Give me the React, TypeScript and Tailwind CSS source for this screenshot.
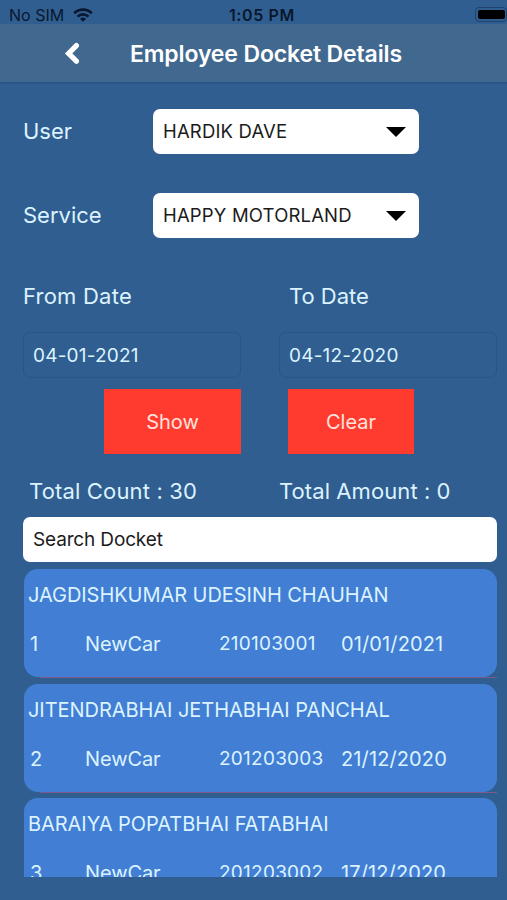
const dockets = [
  { id: 1, name: 'JAGDISHKUMAR UDESINH CHAUHAN', type: 'NewCar', number: '210103001', date: '01/01/2021' },
  { id: 2, name: 'JITENDRABHAI JETHABHAI PANCHAL', type: 'NewCar', number: '201203003', date: '21/12/2020' },
  { id: 3, name: 'BARAIYA POPATBHAI FATABHAI', type: 'NewCar', number: '201203002', date: '17/12/2020' },
]

function StatusBar() {
  return (
    <div className="flex h-6 items-center bg-[#305e90] pl-[9px] pt-[5px] text-[#08182e]">
      <div className="flex w-[220px] items-center gap-[9px]">
        <span className="text-[16px] leading-none">No SIM</span>
        <svg width="20" height="14" viewBox="0 0 20 14" fill="none" stroke="currentColor" strokeWidth="2.6">
          <path d="M1.2 5.2a12.6 12.6 0 0 1 17.6 0" />
          <path d="M4.5 8.6a7.8 7.8 0 0 1 11 0" />
          <path d="M7 11a4.3 4.3 0 0 1 6 0L10 13.8z" fill="currentColor" stroke="none" />
        </svg>
      </div>
      <span className="whitespace-nowrap text-[16px] font-semibold leading-none tracking-[0.6px]">1:05 PM</span>
      <div className="flex flex-1 justify-end">
        <div className="h-[15px] w-[32px] rounded-[4px] border border-[#1d4270] py-[2px] pl-[2px]">
          <div className="h-full w-[27px] rounded-[2px] bg-black" />
        </div>
      </div>
    </div>
  )
}

function Header() {
  return (
    <header className="flex h-[60px] items-center border-b-2 border-[#2b5688] bg-[#41698f] pl-[64px] text-white">
      <svg width="16" height="22" viewBox="0 0 16 22" fill="none" stroke="currentColor" strokeWidth="5.2">
        <path d="M12.4 3.6 4.6 11.4l7.8 7.8" strokeLinecap="round" strokeLinejoin="miter" />
      </svg>
      <h1 className="ml-[50px] whitespace-nowrap pt-[3px] text-[23px] font-semibold leading-none tracking-[-0.14px]">
        Employee Docket Details
      </h1>
    </header>
  )
}

function SelectRow({ label, value }: { label: string; value: string }) {
  return (
    <div className="flex h-[45px] items-center">
      <label className="w-[130px] text-[22px]">{label}</label>
      <button className="flex h-full w-[266px] items-center justify-between rounded-[7px] bg-white pl-[10px] pr-[13px] text-[18.5px] tracking-[0.17px] text-[#1b1b1b]">
        <span>{value}</span>
        <svg width="20" height="10" viewBox="0 0 20 10">
          <path d="M0 0h20L10 10z" fill="#000" />
        </svg>
      </button>
    </div>
  )
}

function DateInput({ value }: { value: string }) {
  return (
    <div className="flex h-[46px] w-[218px] items-center rounded-[7px] border border-[#295483] pl-[9px] pt-[2px] text-[19px] tracking-[0.2px]">
      {value}
    </div>
  )
}

function DocketCard({ docket }: { docket: (typeof dockets)[number] }) {
  return (
    <div className="h-[114.5px] shrink-0">
      <div className="h-[108px] rounded-[14px] bg-[#427fd4] pl-1 pt-[12.4px]">
        <div className="h-7 whitespace-nowrap text-[20px] leading-7 tracking-[-0.05px]">{docket.name}</div>
        <div className="mt-[21px] flex h-7 text-[20px] leading-7">
          <span className="w-[57px] pl-[2px]">{docket.id}</span>
          <span className="w-[134px] tracking-[-0.1px]">{docket.type}</span>
          <span className="w-[122px] text-[19px] tracking-[0.25px]">{docket.number}</span>
          <span className="tracking-[0.12px]">{docket.date}</span>
        </div>
      </div>
      <div className="ml-4 h-px bg-[#7d5a8c]" />
    </div>
  )
}

export default function App() {
  return (
    <div className="flex h-[900px] w-[507px] flex-col overflow-hidden bg-[#305e90] font-['Inter',sans-serif] text-[#dcf3ff]">
      <StatusBar />
      <Header />
      <main className="pl-[23px] pt-[25px]">
        <div className="flex flex-col gap-[39px]">
          <SelectRow label="User" value="HARDIK DAVE" />
          <SelectRow label="Service" value="HAPPY MOTORLAND" />
        </div>

        <div className="mt-[43px] flex h-[30px] items-center text-[22px]">
          <span className="w-[266px] tracking-[0.22px]">From Date</span>
          <span>To Date</span>
        </div>
        <div className="mt-[21px] flex gap-[38px]">
          <DateInput value="04-01-2021" />
          <DateInput value="04-12-2020" />
        </div>

        <div className="mt-[11px] flex h-[65px] gap-[47px] pl-[81px] text-[20px] text-[#ffe3dc]">
          <button className="w-[137px] bg-[#ff3b30] pt-px">Show</button>
          <button className="w-[126px] bg-[#ff3b30] pt-px">Clear</button>
        </div>

        <div className="mt-[22px] flex h-[30px] items-center pl-[6px] text-[22px]">
          <span className="w-[250px] tracking-[0.16px]">Total Count : 30</span>
          <span className="tracking-[0.08px]">Total Amount : 0</span>
        </div>

        <input
          type="text"
          placeholder="Search Docket"
          className="mt-[11px] block h-[45px] w-[474px] rounded-[7px] bg-white pl-[10px] text-[19px] tracking-[-0.15px] placeholder:text-[#1b1b1b]"
        />

        <div className="ml-px mt-[7px] flex h-[308px] w-[473px] flex-col overflow-hidden">
          {dockets.map((d) => (
            <DocketCard key={d.id} docket={d} />
          ))}
        </div>
      </main>
    </div>
  )
}
